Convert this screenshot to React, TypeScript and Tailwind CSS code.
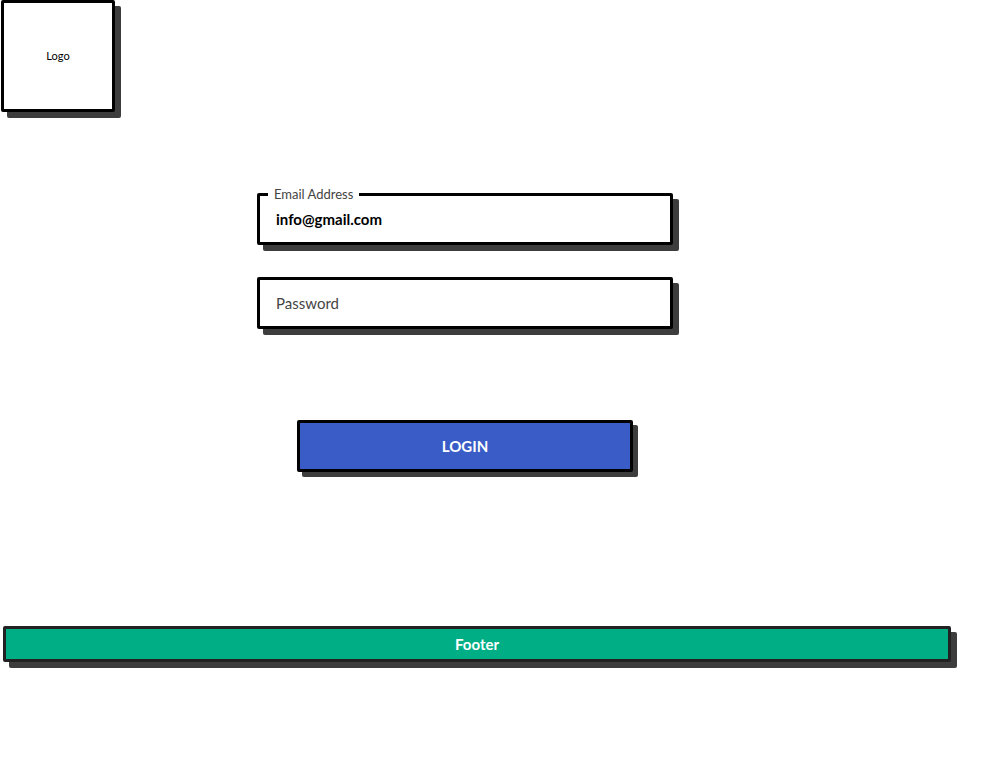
import React from "react";

export default function App() {
  return (
    <div className="min-h-[761px] w-[992px] bg-white font-['Lato',_'Liberation_Sans',_sans-serif] text-black">
      <div className="flex flex-col">
        <div className="ml-px flex h-[112px] w-[114px] items-center justify-center rounded-[2px] border-[3px] border-black bg-white text-[11px] shadow-[6px_6px_0_#3d3d3d]">
          Logo
        </div>

        <div className="ml-[257px] mt-[81px] flex w-[416px] flex-col">
          <div className="relative flex h-[52px] items-center rounded-[2px] border-[3px] border-black bg-white pl-4 shadow-[6px_6px_0_#3d3d3d]">
            <span className="absolute left-[8px] top-[-10px] bg-white px-[6px] text-[13px] leading-[16px] text-[#444]">
              Email Address
            </span>
            <span className="text-[15px] font-bold">info@gmail.com</span>
          </div>

          <div className="mt-8 flex h-[52px] items-center rounded-[2px] border-[3px] border-black bg-white pl-4 text-[15px] text-[#444] shadow-[6px_6px_0_#3d3d3d]">
            Password
          </div>

          <div className="ml-10 mt-[91px] flex h-[52px] w-[336px] items-center justify-center rounded-[2px] border-[3px] border-black bg-[#3a5cc7] text-[15px] font-bold text-white shadow-[5px_5px_0_#3d3d3d]">
            LOGIN
          </div>
        </div>

        <div className="ml-[3px] mt-[154px] flex h-[36px] w-[948px] items-center justify-center rounded-[2px] border-[3px] border-[#222] bg-[#00ae86] text-[15px] font-bold text-white shadow-[6px_6px_0_#3d3d3d]">
          Footer
        </div>
      </div>
    </div>
  );
}
